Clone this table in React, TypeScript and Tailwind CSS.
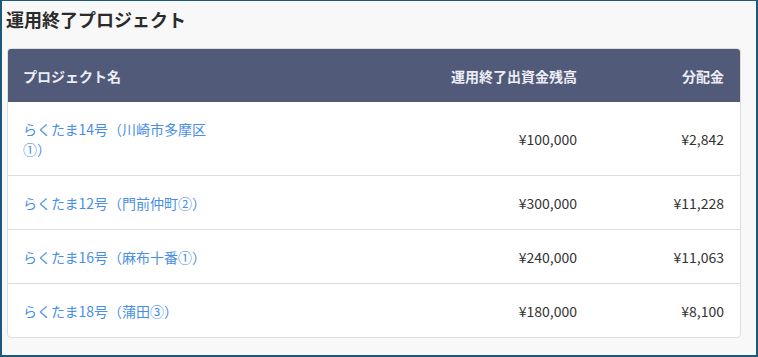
const rows = [
  { name: "らくたま14号（川崎市多摩区①）", balance: "¥100,000", dividend: "¥2,842" },
  { name: "らくたま12号（門前仲町②）", balance: "¥300,000", dividend: "¥11,228" },
  { name: "らくたま16号（麻布十番①）", balance: "¥240,000", dividend: "¥11,063" },
  { name: "らくたま18号（蒲田③）", balance: "¥180,000", dividend: "¥8,100" },
]

export default function App() {
  return (
    <div
      className="h-screen w-full border-x-2 border-t border-b-2 border-[#1b5a7c] bg-[#f8f8f8] text-[#333]"
      style={{ fontFamily: '"Noto Sans CJK JP", "Noto Sans", sans-serif' }}
    >
      <h2 className="pl-[4px] pt-[6px] text-[18px] font-bold leading-[24px] text-[#2b2b2b]">運用終了プロジェクト</h2>
      <div className="ml-[5px] mt-[17px] w-[734px] overflow-hidden rounded-[4px] border border-[#dddddd] bg-white">
        <div className="grid grid-cols-[220px_1fr_147px] bg-[#525a7a] text-sm font-bold leading-5 text-[#eceef3]">
          <div className="pl-[15px] pr-4 py-[16.5px]">プロジェクト名</div>
          <div className="px-4 py-[16.5px] text-right">運用終了出資金残高</div>
          <div className="px-4 py-[16.5px] text-right">分配金</div>
        </div>
        {rows.map((row, i) => (
          <div
            key={row.name}
            className={`grid grid-cols-[220px_1fr_147px] text-sm leading-5 ${i > 0 ? "border-t border-[#dddddd]" : ""}`}
          >
            <div className="pl-[15px] pr-4 py-[16.5px] text-[#4a8fe6]">{row.name}</div>
            <div className="flex items-center justify-end px-4 py-[16.5px]">{row.balance}</div>
            <div className="flex items-center justify-end px-4 py-[16.5px]">{row.dividend}</div>
          </div>
        ))}
      </div>
    </div>
  )
}
